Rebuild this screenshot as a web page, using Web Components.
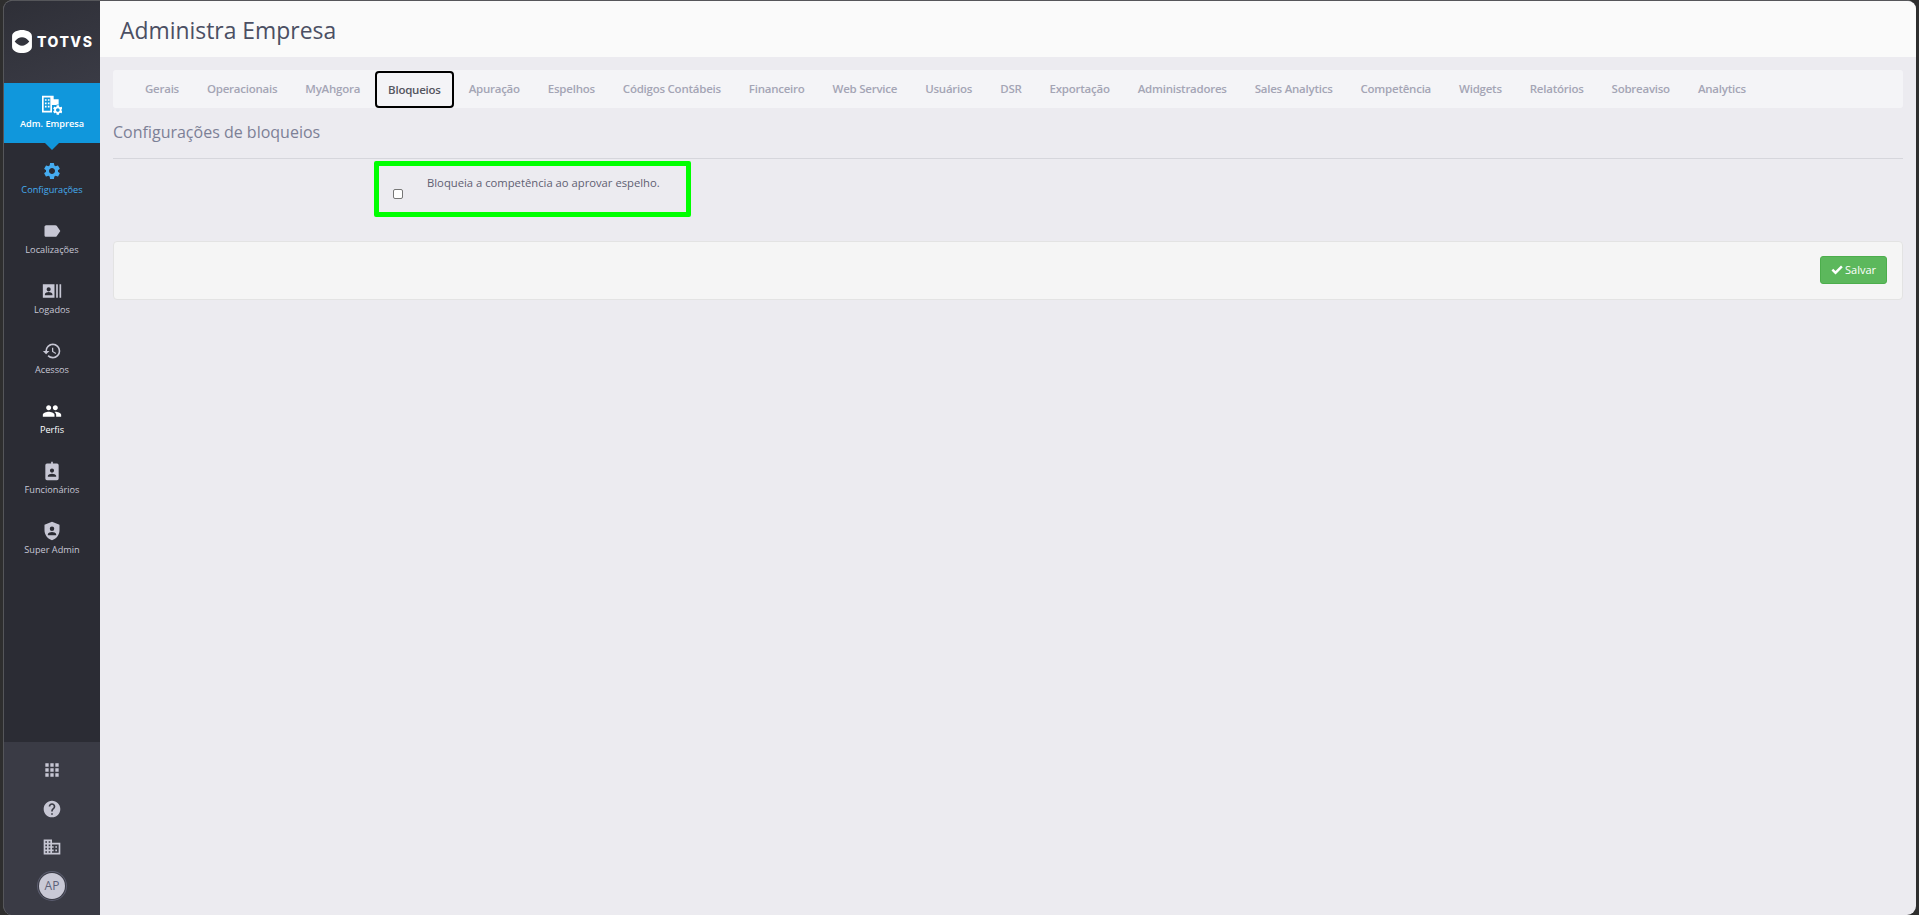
<!DOCTYPE html>
<html lang="pt-BR">
<head>
<meta charset="utf-8">
<title>Administra Empresa</title>
<style>
  html, body { margin: 0; height: 100%; background: #2e2e2e; overflow: hidden; }
  body { font-family: "Open Sans", "Liberation Sans", sans-serif; }
</style>
</head>
<body>
<ah-app>
  <ah-sidebar slot="side">
    <ah-nav-item label="Adm. Empresa" icon="admin" state="active"></ah-nav-item>
    <ah-nav-item label="Configurações" icon="settings" state="current"></ah-nav-item>
    <ah-nav-item label="Localizações" icon="label"></ah-nav-item>
    <ah-nav-item label="Logados" icon="logged"></ah-nav-item>
    <ah-nav-item label="Acessos" icon="history"></ah-nav-item>
    <ah-nav-item label="Perfis" icon="people" state="bright"></ah-nav-item>
    <ah-nav-item label="Funcionários" icon="badge"></ah-nav-item>
    <ah-nav-item label="Super Admin" icon="shield"></ah-nav-item>
  </ah-sidebar>
  <ah-header>Administra Empresa</ah-header>
  <ah-tabs selected="Bloqueios" items="Gerais|Operacionais|MyAhgora|Bloqueios|Apuração|Espelhos|Códigos Contábeis|Financeiro|Web Service|Usuários|DSR|Exportação|Administradores|Sales Analytics|Competência|Widgets|Relatórios|Sobreaviso|Analytics"></ah-tabs>
  <ah-section title="Configurações de bloqueios">
    <ah-check-field>Bloqueia a competência ao aprovar espelho.</ah-check-field>
  </ah-section>
  <ah-form-actions></ah-form-actions>
</ah-app>

<script>
const GEAR = 'M19.14 12.94c.04-.3.06-.61.06-.94 0-.32-.02-.64-.07-.94l2.03-1.58a.49.49 0 0 0 .12-.61l-1.92-3.32a.488.488 0 0 0-.59-.22l-2.39.96c-.5-.38-1.03-.7-1.62-.94l-.36-2.54a.484.484 0 0 0-.48-.41h-3.84c-.24 0-.43.17-.47.41l-.36 2.54c-.59.24-1.13.57-1.62.94l-2.39-.96c-.22-.08-.47 0-.59.22L2.74 8.87c-.12.21-.08.47.12.61l2.03 1.58c-.05.3-.09.63-.09.94s.02.64.07.94l-2.03 1.58a.49.49 0 0 0-.12.61l1.92 3.32c.12.22.37.29.59.22l2.39-.96c.5.38 1.03.7 1.62.94l.36 2.54c.05.24.24.41.48.41h3.84c.24 0 .44-.17.47-.41l.36-2.54c.59-.24 1.13-.56 1.62-.94l2.39.96c.22.08.47 0 .59-.22l1.92-3.32c.12-.22.07-.47-.12-.61l-2.01-1.58zM12 15.6c-1.98 0-3.6-1.62-3.6-3.6s1.62-3.6 3.6-3.6 3.6 1.62 3.6 3.6-1.62 3.6-3.6 3.6z';

const ICONS = {
  admin: `<path fill-rule="evenodd" d="M0 1h14v4h6v7h-8v9H0zM2 3v16h8V3z"/><path d="M3.500 5h2v2h-2zm3.500 0h2v2H7zM3.500 9h2v2h-2zM7 9h2v2H7zm-3.500 4h2v2h-2zM7 13h2v2H7zm8-5.500h2v2h-2z"/><circle cx="19" cy="18" r="6.500" fill="#1097dc"/><path transform="translate(11.800 10.800) scale(.6)" d="${GEAR}"/>`,
  settings: `<path d="${GEAR}"/>`,
  label: `<path d="M17.63 5.84C17.27 5.33 16.67 5 16 5L5 5.01C3.9 5.01 3 5.9 3 7v10c0 1.1.9 1.99 2 1.99L16 19c.67 0 1.27-.33 1.63-.84L22 12l-4.37-6.16z"/>`,
  logged: `<path fill-rule="evenodd" d="M1 4h14v16H1zm7 3.5a2.5 2.5 0 1 0 0 5 2.5 2.5 0 0 0 0-5zM3.5 17h9v-1.3c0-1.7-3-2.5-4.5-2.5s-4.5.8-4.5 2.5z"/><path d="M17 4h2v16h-2zm4 0h2v16h-2z"/>`,
  history: `<path d="M13 3a9 9 0 0 0-9 9H1l3.89 3.89.07.14L9 12H6c0-3.87 3.13-7 7-7s7 3.13 7 7-3.13 7-7 7c-1.93 0-3.68-.79-4.94-2.06l-1.42 1.42A8.954 8.954 0 0 0 13 21a9 9 0 0 0 0-18zm-1 5v5l4.28 2.54.72-1.21-3.5-2.08V8H12z"/>`,
  people: `<path d="M16 11c1.66 0 2.99-1.34 2.99-3S17.66 5 16 5c-1.66 0-3 1.34-3 3s1.34 3 3 3zm-8 0c1.66 0 2.99-1.34 2.99-3S9.66 5 8 5C6.34 5 5 6.34 5 8s1.34 3 3 3zm0 2c-2.33 0-7 1.17-7 3.5V19h14v-2.5c0-2.33-4.67-3.5-7-3.5zm8 0c-.29 0-.62.02-.97.05 1.16.84 1.97 1.97 1.97 3.45V19h6v-2.5c0-2.33-4.67-3.5-7-3.5z"/>`,
  badge: `<path fill-rule="evenodd" d="M6 3h5V1h2v2h5a2 2 0 0 1 2 2v16a2 2 0 0 1-2 2H6a2 2 0 0 1-2-2V5a2 2 0 0 1 2-2zm6 6a2.5 2.5 0 1 0 0 5 2.5 2.5 0 0 0 0-5zM7 19h10v-1.3c0-1.7-3.3-2.5-5-2.5s-5 .8-5 2.5z"/>`,
  shield: `<path fill-rule="evenodd" d="M12 1l9 3.5v6.6c0 5.4-3.7 10.4-9 11.9-5.3-1.5-9-6.5-9-11.9V4.5zm0 5.5a2.7 2.7 0 1 0 0 5.4 2.7 2.7 0 0 0 0-5.4zM7 17h10v-1c0-1.8-3.3-2.7-5-2.7s-5 .9-5 2.7z"/>`,
  apps: `<path d="M4 8h4V4H4zm6 12h4v-4h-4zm-6 0h4v-4H4zm0-6h4v-4H4zm6 0h4v-4h-4zm6-10v4h4V4zm-6 4h4V4h-4zm6 6h4v-4h-4zm0 6h4v-4h-4z"/>`,
  help: `<path d="M12 2C6.48 2 2 6.48 2 12s4.48 10 10 10 10-4.48 10-10S17.52 2 12 2zm1 17h-2v-2h2v2zm2.07-7.75l-.9.92C13.45 12.9 13 13.5 13 15h-2v-.5c0-1.1.45-2.1 1.17-2.83l1.24-1.26c.37-.36.59-.86.59-1.41 0-1.1-.9-2-2-2s-2 .9-2 2H8c0-2.21 1.79-4 4-4s4 1.79 4 4c0 .88-.36 1.68-.93 2.25z"/>`,
  domain: `<path d="M12 7V3H2v18h20V7H12zM6 19H4v-2h2v2zm0-4H4v-2h2v2zm0-4H4V9h2v2zm0-4H4V5h2v2zm4 12H8v-2h2v2zm0-4H8v-2h2v2zm0-4H8V9h2v2zm0-4H8V5h2v2zm10 12h-8v-2h2v-2h-2v-2h2v-2h-2V9h8v10zm-2-8h-2v2h2v-2zm0 4h-2v2h2v-2z"/>`
};

class AhApp extends HTMLElement {
  connectedCallback() {
    this.attachShadow({ mode: 'open' });
    this.shadowRoot.innerHTML = `
      <style>
        :host {
          display: flex;
          height: 914px;
          margin: 0 3px 0 3px;
          border-top: 1px solid #55565a;
          border-left: 1px solid #55565a;
          border-radius: 9px;
          overflow: hidden;
          background: #ecebf0;
        }
        .main {
          flex: 1;
          min-width: 0;
          display: flex;
          flex-direction: column;
        }
      </style>
      <slot name="side"></slot>
      <div class="main"><slot></slot></div>
    `;
  }
}

class AhSidebar extends HTMLElement {
  connectedCallback() {
    this.attachShadow({ mode: 'open' });
    this.shadowRoot.innerHTML = `
      <style>
        :host {
          display: flex;
          flex-direction: column;
          flex: 0 0 96px;
          width: 96px;
          background: #2b2c34;
          color: #c7c7d4;
        }
        .brand {
          height: 82px;
          box-sizing: border-box;
          padding: 29px 0 0 8px;
          background: linear-gradient(160deg, #2e2f37, #3a3b45);
        }
        .logo { display: flex; align-items: center; gap: 5px; color: #fff; }
        .logo span {
          font: 800 14px/22px Inter, "Liberation Sans", sans-serif;
          letter-spacing: 1.5px;
        }
        nav { flex: 1; display: flex; flex-direction: column; }
        .foot {
          flex: 0 0 173px;
          box-sizing: border-box;
          background: #3a3b45;
          display: flex;
          flex-direction: column;
          align-items: center;
          padding-top: 18px;
        }
        .foot svg { width: 20px; height: 20px; fill: #c7c7d4; display: block; }
        .foot .ico { height: 38.5px; }
        .avatar {
          width: 26px;
          height: 26px;
          border-radius: 50%;
          background: #c9c9d6;
          color: #5c6078;
          font-size: 12px;
          line-height: 26px;
          text-align: center;
          box-shadow: 0 0 0 1px #3a3b45, 0 0 0 2px #5c5e70;
          margin-top: -2.5px;
        }
      </style>
      <div class="brand">
        <div class="logo">
          <svg width="20" height="23" viewBox="0 0 19 22" fill="#fff">
            <path fill-rule="evenodd" d="M9.500 0C14 0 19 2 19 6v10c0 4-5 6-9.500 6S0 20 0 16V6C0 2 5 0 9.500 0zM2.500 11c2 2.600 4.500 4 7 4s5-1.400 7-4c-2-2.600-4.500-4-7-4s-5 1.400-7 4z"/>
          </svg>
          <span>TOTVS</span>
        </div>
      </div>
      <nav><slot></slot></nav>
      <div class="foot">
        <div class="ico"><svg viewBox="0 0 24 24">${ICONS.apps}</svg></div>
        <div class="ico"><svg viewBox="0 0 24 24">${ICONS.help}</svg></div>
        <div class="ico"><svg viewBox="0 0 24 24">${ICONS.domain}</svg></div>
        <div class="avatar">AP</div>
      </div>
    `;
  }
}

class AhNavItem extends HTMLElement {
  connectedCallback() {
    this.attachShadow({ mode: 'open' });
    const icon = ICONS[this.getAttribute('icon')] || '';
    this.shadowRoot.innerHTML = `
      <style>
        :host {
          display: flex;
          flex-direction: column;
          align-items: center;
          height: 60px;
          box-sizing: border-box;
          padding-top: 18px;
          position: relative;
          color: #c7c7d4;
          font-size: 9.2px;
          line-height: 14px;
        }
        svg { width: 20px; height: 20px; fill: currentColor; display: block; margin-bottom: 1px; }
        .label { margin-top: 1px; white-space: nowrap; }
        :host([state="active"]) { background: #1097dc; color: #fff; font-weight: 600; padding-top: 12px; }
        :host([state="active"])::after {
          content: '';
          position: absolute;
          left: 41px;
          bottom: -7px;
          border-left: 7px solid transparent;
          border-right: 7px solid transparent;
          border-top: 7px solid #1097dc;
        }
        :host([state="current"]) { color: #45acf0; }
        :host([state="bright"]) { color: #fff; }
      </style>
      <svg viewBox="0 0 24 24">${icon}</svg>
      <div class="label">${this.getAttribute('label')}</div>
    `;
  }
}

class AhHeader extends HTMLElement {
  connectedCallback() {
    this.attachShadow({ mode: 'open' });
    this.shadowRoot.innerHTML = `
      <style>
        :host {
          display: flex;
          align-items: center;
          flex: 0 0 56px;
          box-sizing: border-box;
          height: 56px;
          background: #fafafa;
          color: #4b4f63;
          font-size: 22.9px;
          line-height: 31px;
          padding: 2px 0 0 20px;
        }
      </style>
      <slot></slot>
    `;
  }
}

class AhTabs extends HTMLElement {
  connectedCallback() {
    this.attachShadow({ mode: 'open' });
    const selected = this.getAttribute('selected');
    const items = this.getAttribute('items').split('|').map(name =>
      `<a class="${name === selected ? 'on' : ''}">${name}</a>`).join('');
    this.shadowRoot.innerHTML = `
      <style>
        :host {
          display: block;
          margin: 13px 13px 0;
          background: #f4f4f7;
          border-radius: 3px;
        }
        .row { display: flex; height: 38px; padding-left: 18px; align-items: stretch; }
        a {
          display: block;
          padding: 0 14px;
          font-size: 11.5px;
          font-weight: 600;
          letter-spacing: -.24px;
          line-height: 38px;
          color: #a4a5b5;
          white-space: nowrap;
        }
        a.on {
          color: #55565f;
          padding: 0 11px;
          margin: 1px 1px 0 1px;
          line-height: 33px;
          border: 2px solid #000;
          border-radius: 4px;
        }
      </style>
      <div class="row">${items}</div>
    `;
  }
}

class AhSection extends HTMLElement {
  connectedCallback() {
    this.attachShadow({ mode: 'open' });
    this.shadowRoot.innerHTML = `
      <style>
        :host { display: block; margin: 0 13px; }
        h2 {
          margin: 0;
          height: 51px;
          box-sizing: border-box;
          font-size: 16px;
          font-weight: 400;
          line-height: 48px;
          color: #7c8096;
          border-bottom: 1px solid #d6d6dc;
        }
        .body { padding: 2px 0 0 261px; }
      </style>
      <h2>${this.getAttribute('title')}</h2>
      <div class="body"><slot></slot></div>
    `;
  }
}

class AhCheckField extends HTMLElement {
  connectedCallback() {
    this.attachShadow({ mode: 'open' });
    this.shadowRoot.innerHTML = `
      <style>
        :host {
          display: block;
          box-sizing: border-box;
          width: 317px;
          height: 56px;
          border: 5px solid #00ff00;
          border-radius: 2px;
        }
        .wrap { display: flex; padding: 6px 0 0 14px; }
        input {
          appearance: none;
          width: 10px;
          height: 10px;
          box-sizing: border-box;
          margin: 17px 24px 0 0;
          background: #fff;
          border: 1px solid #767676;
          border-radius: 2px;
          flex: none;
        }
        label { font-size: 11.25px; line-height: 22px; color: #5f6072; white-space: nowrap; }
      </style>
      <div class="wrap">
        <input type="checkbox" id="c">
        <label for="c"><slot></slot></label>
      </div>
    `;
  }
}

class AhFormActions extends HTMLElement {
  connectedCallback() {
    this.attachShadow({ mode: 'open' });
    this.shadowRoot.innerHTML = `
      <style>
        :host {
          display: flex;
          justify-content: flex-end;
          align-items: center;
          box-sizing: border-box;
          height: 59px;
          margin: 24px 13px 0;
          padding: 0 15px 2px 0;
          background: #f5f5f5;
          border: 1px solid #e3e3e3;
          border-radius: 4px;
        }
        button {
          display: flex;
          align-items: center;
          justify-content: center;
          gap: 2px;
          width: 67px;
          height: 28px;
          padding: 0;
          background: #5cb85c;
          border: 1px solid #4cae4c;
          border-radius: 3px;
          color: #fff;
          font: 400 11px "Open Sans", "Liberation Sans", sans-serif;
        }
        svg { width: 12px; height: 12px; fill: #fff; }
      </style>
      <button type="button">
        <svg viewBox="0 0 24 24"><path d="M9 21 1 13l3.500-3.500L9 14 20 3l3.500 3.500z"/></svg>
        Salvar
      </button>
    `;
  }
}

customElements.define('ah-app', AhApp);
customElements.define('ah-sidebar', AhSidebar);
customElements.define('ah-nav-item', AhNavItem);
customElements.define('ah-header', AhHeader);
customElements.define('ah-tabs', AhTabs);
customElements.define('ah-section', AhSection);
customElements.define('ah-check-field', AhCheckField);
customElements.define('ah-form-actions', AhFormActions);
</script>
</body>
</html>
